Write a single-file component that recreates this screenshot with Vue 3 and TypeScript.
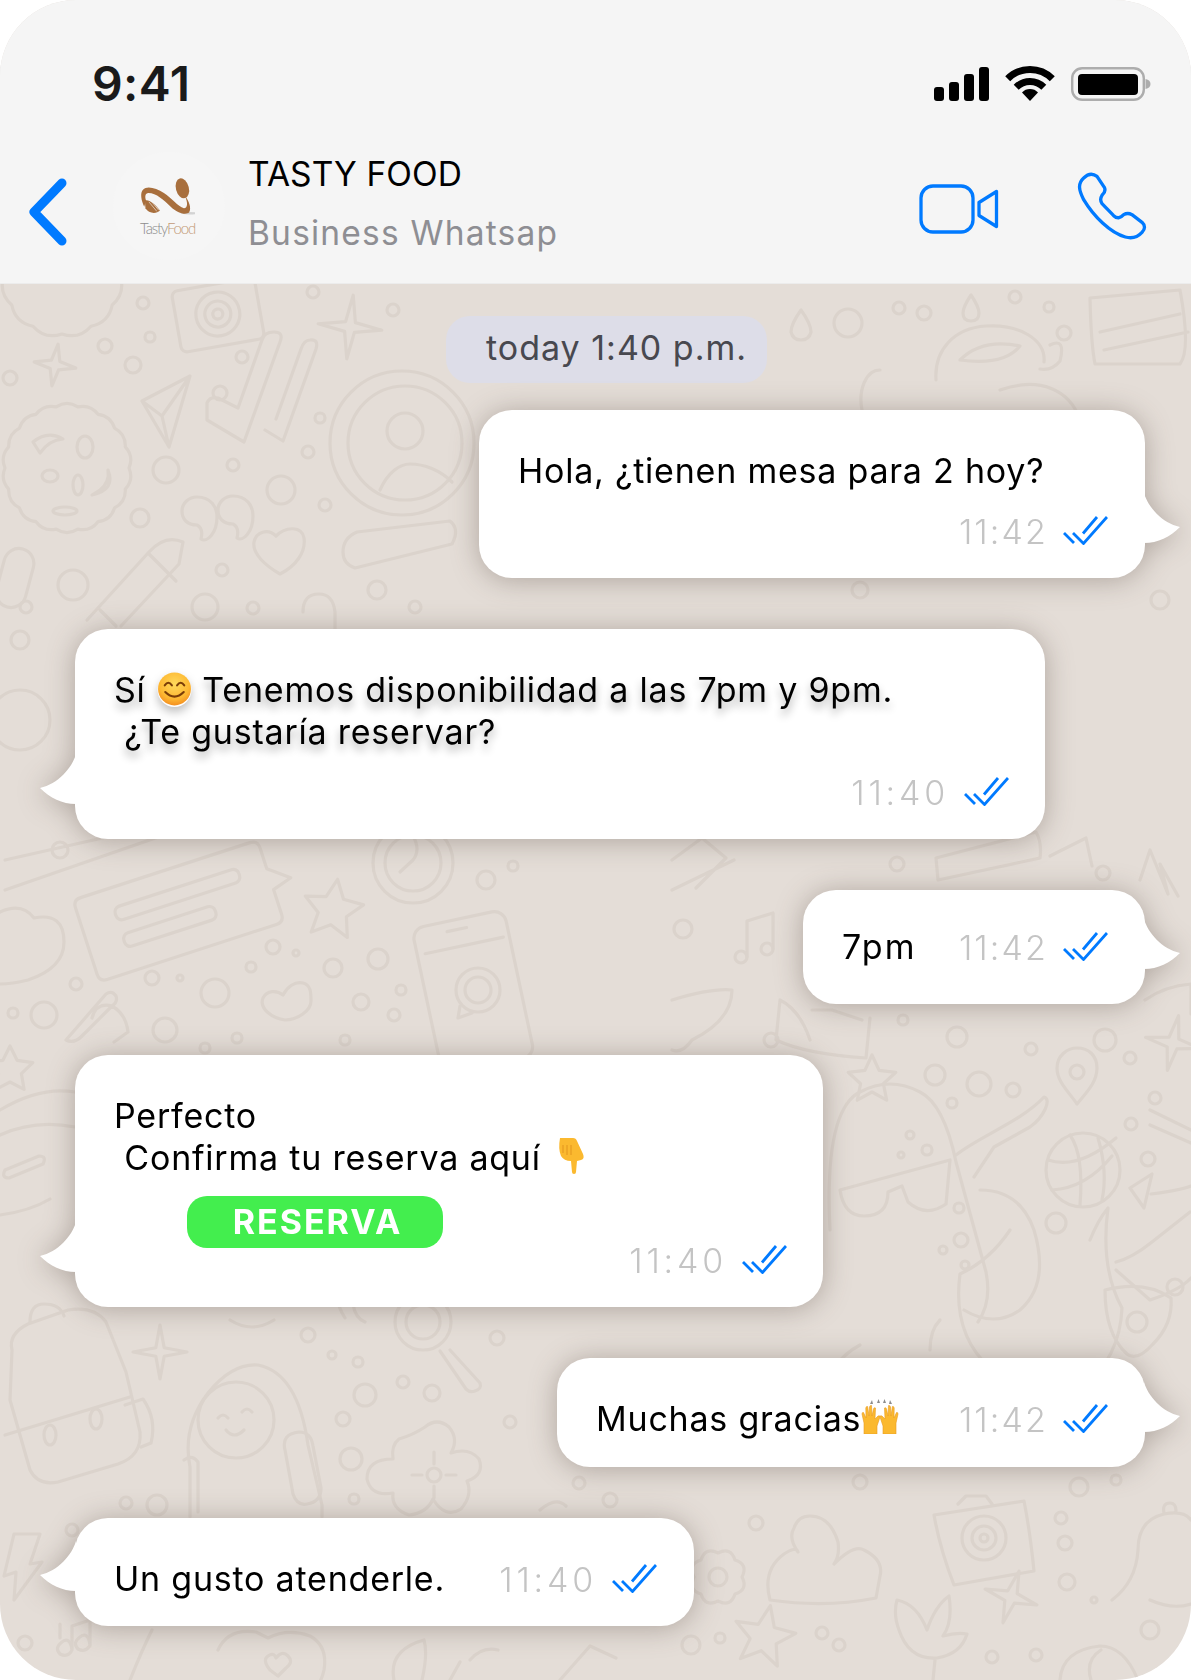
<script setup lang="ts">
type Circle = [number, number, number]

const circles: Circle[] = [
  [143,303,6],[105,346,7],[150,337,5],[133,365,8],[10,378,7],[242,357,6],[313,292,6],[393,310,6],[220,393,7],[320,418,5],
  [308,452,6],[166,470,13],[233,465,6],[281,490,14],[140,518,9],[325,505,6],[222,570,6],[73,585,15],[26,607,6],[205,607,13],
  [253,608,6],[377,590,9],[415,607,6],[486,880,9],[513,866,5],[273,947,7],[296,953,3],[251,967,5],[333,968,9],[378,959,10],
  [76,984,6],[152,978,7],[180,978,3],[215,993,14],[361,1002,8],[401,990,5],[394,1015,6],[13,1013,5],[44,1015,13],[165,1030,12],
  [237,1038,5],[205,1048,5],[345,1040,5],[308,1335,7],[332,1355,4],[358,1362,5],[497,1338,7],[403,1382,6],[365,1395,11],[432,1393,8],
  [343,1419,7],[351,1459,11],[354,1499,5],[126,1503,6],[157,1505,10],[510,1422,6],[25,1643,7],[72,1530,6],[683,929,9],[897,864,7],
  [1103,873,7],[903,1020,5],[957,1037,10],[771,1040,7],[1031,1049,6],[1105,1040,11],[1130,1058,6],[935,1075,10],[979,1084,12],[1013,1090,7],
  [952,1103,5],[1155,1098,6],[1131,1124,6],[1148,1159,7],[1056,1223,10],[959,1208,5],[961,1240,7],[943,1250,4],[965,1265,4],[1175,1287,8],
  [910,1135,4],[927,1150,5],[901,1155,3],[899,308,6],[924,313,7],[1015,297,6],[1049,307,5],[1064,333,7],[848,323,14],[756,1523,7],
  [579,1483,6],[610,1500,7],[860,1482,7],[1079,1487,9],[1116,1480,5],[1061,1518,6],[1065,1543,7],[1067,1582,8],[1094,1600,3],[822,1633,6],
  [839,1645,6],[720,1638,5],[691,1645,9],[992,1657,6],[1036,1655,6],[1150,1630,9],[20,640,9],[20,720,30],[60,850,8],[860,590,8],[1160,600,9]
]

function scallop(cx: number, cy: number, r: number, n: number, bump: number): string {
  let d = ''
  for (let i = 0; i <= n; i++) {
    const a = (i / n) * Math.PI * 2
    const x = (cx + r * Math.cos(a)).toFixed(1)
    const y = (cy + r * Math.sin(a)).toFixed(1)
    if (i === 0) {
      d += `M${x} ${y}`
    } else {
      const m = a - Math.PI / n
      const qx = (cx + (r + bump) * Math.cos(m)).toFixed(1)
      const qy = (cy + (r + bump) * Math.sin(m)).toFixed(1)
      d += `Q${qx} ${qy} ${x} ${y}`
    }
  }
  return d + 'Z'
}

function star(cx: number, cy: number, r: number, inner: number, points: number, rot = 0): string {
  let d = ''
  for (let i = 0; i < points * 2; i++) {
    const rad = i % 2 === 0 ? r : inner
    const a = (i * Math.PI) / points - Math.PI / 2 + rot
    d += `${i === 0 ? 'M' : 'L'}${(cx + rad * Math.cos(a)).toFixed(1)} ${(cy + rad * Math.sin(a)).toFixed(1)}`
  }
  return d + 'Z'
}

const cookie = scallop(67, 468, 62, 18, 6)
const cloud = scallop(62, 276, 58, 12, 8)
const gear = scallop(718, 1577, 24, 8, 9)
const stars = [
  star(350, 327, 32, 7, 4, 0.1),
  star(55, 365, 21, 6, 4, 0.15),
  star(160, 1352, 27, 6, 4),
  star(1173, 1043, 28, 7, 4, 0.2),
  star(1011, 1597, 27, 7, 4, 0.3),
  star(333, 910, 31, 15, 5, 0.15),
  star(872, 1080, 25, 12, 5),
  star(10, 1070, 24, 12, 5),
  star(764, 1637, 32, 14, 5, 0.2)
]
</script>

<template>
  <main class="phone">
    <header class="head">
      <div class="status">
        <span class="clock">9:41</span>
        <div class="status-icons">
          <svg class="signal" viewBox="0 0 55 34" aria-hidden="true">
            <rect x="0" y="20" width="10" height="14" rx="3" />
            <rect x="15" y="15" width="10" height="19" rx="3" />
            <rect x="30" y="7" width="10" height="27" rx="3" />
            <rect x="45" y="0" width="10" height="34" rx="3" />
          </svg>
          <svg class="wifi" viewBox="0 0 50 36" aria-hidden="true">
            <path d="M2.7 13.7A31.5 31.5 0 0 1 47.3 13.7" fill="none" stroke="#000" stroke-width="7" />
            <path d="M11.2 22.200A19.500 19.500 0 0 1 38.800 22.200" fill="none" stroke="#000" stroke-width="7" />
            <path d="M17 27.500A11 11 0 0 1 33 27.500L25 36Z" fill="#000" />
          </svg>
          <svg class="battery" viewBox="0 0 80 34" aria-hidden="true">
            <rect x="1.2" y="1.200" width="71.600" height="31.600" rx="10" fill="none" stroke="#adadad" stroke-width="2.400" />
            <rect x="7" y="7" width="60" height="21" rx="4" fill="#000" />
            <path d="M74.500 12C78 12.500 79.500 14.500 79.500 17S78 21.500 74.500 22Z" fill="#adadad" />
          </svg>
        </div>
      </div>
      <div class="nav">
        <svg class="back" viewBox="0 0 38 68" aria-hidden="true">
          <path d="M33 5 5 34l28 29" fill="none" stroke="#007aff" stroke-width="9" stroke-linecap="round" stroke-linejoin="round" />
        </svg>
        <div class="avatar">
          <svg class="logo" viewBox="110 100 180 130" aria-hidden="true">
            <ellipse cx="272" cy="221" rx="28" ry="4" fill="#bdbdbd" opacity=".6" />
            <ellipse cx="250" cy="140" rx="21" ry="33" fill="#a86f3d" transform="rotate(-15 250 140)" />
            <path d="M258 165C272 180 280 205 272 218 262 228 235 222 212 200 190 178 165 155 140 155 128 155 128 168 132 180L126 200C116 180 112 155 122 145 135 130 165 140 190 155 215 172 235 198 255 205 268 205 268 185 258 165Z" fill="#a86f3d" />
            <path d="M128 180C140 175 160 190 177 212 165 225 140 222 130 205Z" fill="#a86f3d" />
            <path d="M141 184l26 31M148 181l25 30M155 182l20 25" stroke="#f5f5f5" stroke-width="2" fill="none" />
          </svg>
          <span class="logo-text"><span class="lt-a">Tasty</span><span class="lt-b">Food</span></span>
        </div>
        <div class="title">
          <span class="name">TASTY FOOD</span>
          <span class="sub">Business Whatsap</span>
        </div>
        <svg class="video" viewBox="0 0 80 50" aria-hidden="true">
          <rect x="2" y="2" width="52" height="46" rx="12" fill="none" stroke="#007aff" stroke-width="3.300" />
          <path d="M77.500 7.500v35L60 31.500v-13Z" fill="none" stroke="#007aff" stroke-width="3.300" stroke-linejoin="round" />
        </svg>
        <svg class="call" viewBox="830 424 210 210" aria-hidden="true">
          <path d="M850 445Q870 425 890 440L912 473Q918 485 905 497 897 510 905 522L940 558Q955 572 970 555 982 548 995 555L1025 578Q1040 592 1025 608 1005 630 975 622C930 610 880 560 850 510 835 480 832 462 850 445Z" fill="none" stroke="#007aff" stroke-width="10" stroke-linejoin="round" />
        </svg>
      </div>
    </header>

    <section class="chat">
      <svg class="doodles" viewBox="0 283 1191 1397" aria-hidden="true">
        <g fill="none" stroke="#dbd3cc" stroke-width="3.200" stroke-linecap="round" stroke-linejoin="round">
          <circle v-for="(c, i) in circles" :key="i" :cx="c[0]" :cy="c[1]" :r="c[2]" />
          <path v-for="(s, i) in stars" :key="'s' + i" :d="s" />
          <path :d="cookie" />
          <path :d="cloud" />
          <path :d="gear" />
          <circle cx="718" cy="1577" r="9" />
          <ellipse cx="85" cy="447" rx="8" ry="11" />
          <ellipse cx="50" cy="476" rx="8" ry="6" />
          <ellipse cx="78" cy="485" rx="5" ry="10" />
          <ellipse cx="65" cy="511" rx="12" ry="4" />
          <path d="M33 442q15-12 30-3-14 1-23 14ZM100 490q10-8 8-20 8 20-16 25Z" />
          <g transform="rotate(-10 218 315)">
            <rect x="176" y="284" width="84" height="62" rx="6" />
            <circle cx="218" cy="314" r="22" /><circle cx="218" cy="314" r="13" /><circle cx="218" cy="314" r="5" />
          </g>
          <path d="M190 376 142 401l27 46ZM190 376l-28 40-20-15M162 416l7 31" />
          <path d="M207 420l37 22 36-100q4-10-6-10t-12 8l-24 68-20-10q-8-2-11 5ZM265 430l18 11 33-92q3-10-6-9-6 0-9 9l-25 70" />
          <circle cx="402" cy="443" r="72" /><circle cx="405" cy="443" r="57" /><circle cx="405" cy="431" r="18" />
          <path d="M380 490c8-18 20-26 30-26 14 0 30 6 42 18" />
          <path d="M197 497c14 0 20 10 20 20 0 16-10 26-16 22 2-8 0-12-4-14-10 0-15-6-15-14s7-14 15-14ZM233 496c14 0 20 10 20 20 0 16-10 26-16 22 2-8 0-12-4-14-10 0-15-6-15-14s7-14 15-14Z" />
          <path d="M280 574c-14-8-28-20-26-32 2-10 14-14 22-6 10-10 26-10 28 2 2 14-8 28-24 36Z" />
          <path d="M357 532 450 521q10 8 2 23l-97 24q-12-4-12-16 0-14 14-20Z" />
          <path d="M87 620l62-68q16-18 34-10l-4 22-58 62M148 553l28 28M100 610l16 16" />
          <rect x="0" y="548" width="30" height="60" rx="15" transform="rotate(15 15 578)" />
          <path d="M303 612q0-18 16-18 14 0 16 18v20" />
          <g transform="rotate(-18 182 912)">
            <path d="M82 880q0-8 8-8h178q8 0 8 8v22l20 16-20 6v26q0 8-8 8H90q-8 0-8-8Z" transform="translate(0 -5)" />
            <rect x="118" y="887" width="130" height="14" rx="6" />
            <rect x="118" y="915" width="96" height="14" rx="6" />
          </g>
          <path d="M0 912q22-10 34 6 30-6 30 24 0 26-36 38-16 4-28 4" />
          <path d="M5 860 160 825q8 0 4 10L5 890" />
          <circle cx="413" cy="863" r="40" /><circle cx="413" cy="863" r="28" />
          <path d="M413 836q8 14 0 24l-13 12" />
          <path d="M285 1020c-14-2-26-12-22-22 4-8 14-8 20-3 4-8 12-14 20-12 8 2 8 10 8 18 0 10-14 19-26 19Z" />
          <g transform="rotate(-12 470 982)">
            <rect x="424" y="918" width="94" height="150" rx="12" />
            <path d="M432 945h80M458 928h20" />
          </g>
          <circle cx="478" cy="990" r="22" /><circle cx="478" cy="990" r="13" />
          <path d="M460 1006l-2 12 14-5" />
          <path d="M66 1040l40-46q6-4 10 2 2 6-4 10l-30 30q-8 8-16 4ZM92 1018q4-16 20-12 14 8 16 26l-14 10" />
          <path d="M0 1110q40-24 75-18M0 1135q35-16 75-8M5 1170l34-14q8 0 4 8l-34 14q-8 0-4-8ZM0 1215q30-4 50-16" />
          <path d="M12 1350q-4-16 16-26l40-14q26-4 38 12l20 50 14 60q2 24-22 32l-60 18q-20 4-28-12l-20-70Z" />
          <path d="M30 1322q0-18 14-18 16 0 20 12M5 1435l125-38M125 1405l18-6q14 20 8 44l-10 4" />
          <ellipse cx="50" cy="1435" rx="6" ry="10" /><ellipse cx="96" cy="1419" rx="6" ry="10" />
          <path d="M190 1517v-50q-8-40 18-74 24-30 50-28 40 8 50 80l14 60v12" />
          <circle cx="236" cy="1420" r="38" />
          <path d="M218 1418q5-6 10 0M242 1412q5-6 10 0M226 1430q8 10 18 0" />
          <path d="M285 1450q-4-16 14-18 12 0 14 14l8 42q0 14-14 16-10 2-14-10ZM184 1460q8-6 14 2v50" />
          <path d="M425 1427q12-10 24 0 10 12 2 26 18-6 28 6 6 16-12 22 6 14-6 28-16 10-28-10-6 14-24 16-18-6-16-22-22 4-26-14 0-20 26-20-2-14 6-20 14-4 26-12Z" />
          <circle cx="434" cy="1475" r="7" />
          <path d="M434 1452v12M434 1486v12M412 1475h10M446 1475h10" />
          <circle cx="423" cy="1322" r="28" /><circle cx="423" cy="1322" r="17" />
          <path d="M450 1350l30 33q2 6-5 8-5 2-9-2l-26-38" />
          <path d="M345 1318q-10-16-6-24M230 1320q22 14 44 0M365 1322q-10-4-12-18" />
          <path d="M14 1534h26l-10 30 12-2-28 38 2-28-12 4Z" />
          <path d="M60 1638v-14M72 1650q-4 8-12 4-6-6 2-12t10 8ZM90 1645q-4 8-12 4-6-6 2-12t10 8ZM72 1650v-24l18-6v26" />
          <path d="M218 1650q10-22 38-18l12 6q20-10 42-2 18 10 14 34-2 10-8 18M270 1670q-8-10-2-14t8 2q6-8 12-2t-2 12l-8 8Z" />
          <path d="M130 1680q12-30 22-50M394 1680q-6-30 30-40 4 14-2 40M470 1660q12-14 28-10M450 1680l10-18" />
          <path d="M747 957v-36l26-8v36" /><circle cx="741" cy="957" r="6" /><circle cx="767" cy="949" r="6" />
          <path d="M1077 1104c-8-12-20-22-20-36 0-12 10-20 20-20 12 0 20 8 20 20 0 14-10 24-20 36Z" /><circle cx="1077" cy="1072" r="7" />
          <circle cx="1083" cy="1170" r="37" />
          <path d="M1048 1160q30 10 68-22M1052 1190q34-2 60-34M1070 1135q14 20 10 70M1098 1138q10 34 4 62" />
          <path d="M830 1230q-6-120 30-138 30-16 60 0 24 12 36 70l30 110q6 30-8 50" />
          <path d="M840 1190l110-30-4 44q-20 14-38-2l-6-16-14 6q0 24-24 24-20 0-24-26Z" />
          <path d="M956 1155c22-18 66-34 88-58 8 2 0 20-14 30l-36 20-20 30" />
          <path d="M980 1190q40 0 54 40 16 54-14 80-26 18-56 0M1010 1230q-20 30-50 44-8 60 30 94" />
          <path d="M1090 1240q8-20 18-32-8 60 14 100-2 50-40 80" />
          <path d="M1116 1262q16-4 36-20l38-30M1116 1270l34 30q30-10 41-22" />
          <path d="M1150 1110l41 20M1150 1125l41 18" />
          <path d="M1130 1188l22-14-8 34ZM1191 1186q-10 4-40 8" />
          <path d="M1105 1290q40-10 66 8 2 26-18 46-16 18-26 10-22-20-22-64Z" /><circle cx="1137" cy="1322" r="10" />
          <path d="M860 1345q-30 16-36 50-8 30 24 40l60-6M940 1320q-10 10-10 30" />
          <path d="M672 890l62-30M672 860l30-22 24 20-30 30M936 858l100-26q6 10 4 26l-102 22ZM1050 856l36-18 6 28M1140 880l10-30 18 44-8-30 18 32" />
          <path d="M672 1000q40-12 60-10 0 30-40 50-10 14-20 10M780 1000l-4 40q30 14 90 18l4-40M780 1000q20 10 30 40" />
          <path d="M812 1010l20 0 30 10" />
          <path d="M1145 1000q20-14 46-16v30" />
          <path d="M801 310q-10 14-10 22 2 8 10 8t10-8q0-8-10-22ZM971 295q-8 12-8 18 0 8 8 8t8-8q0-6-8-18Z" />
          <path d="M936 380c-2-30 18-52 50-54 34-2 60 14 58 36M960 360q22-22 60-14-16 20-60 14ZM1050 345q16-8 10 16-8 10-20 8" />
          <path d="M1090 298l90-8q11 60 0 74l-85 0q-4-20-5-66ZM1100 332l80-18M1104 350l84-18" />
          <path d="M880 370c-14 0-22 20-18 40M1000 390c40-14 70 0 80 30" />
          <path d="M770 1600q-8-30 14-46 12-8 14-2-10-14-4-24 4-12 16-12 20 0 28 26 2 14-4 22 20-20 30-14 20 10 16 26l-4 22q-50 10-106 2Z" />
          <path d="M934 1515l90-14q6 30 10 70l-80 14q-14-36-20-70ZM958 1504l8-8h20l6 8" />
          <circle cx="984" cy="1538" r="22" /><circle cx="984" cy="1538" r="12" /><circle cx="984" cy="1538" r="4" />
          <path d="M1112 1600q24-18 26-50 0-30 26-36 20-4 27 6M1150 1600q22 10 41 4M1164 1513q-2-10 6-10 6 0 6 8" />
          <path d="M897 1600q20 4 30 30 8-24 22-34 4 26-6 40 14-4 24-2-6 20-30 24-28 2-38-28-6-16-2-30ZM935 1660l-2 20" />
          <path d="M1060 1680q2-30 40-34 24 0 38 34M1091 1680q-6-20 10-30" />
          <path d="M560 1680l30-34 26 12M540 1510q16-14 26-4" />
        </g>
      </svg>

      <div class="pill">today 1:40 p.m.</div>

      <article class="bubble right b1">
        <svg class="tail" viewBox="0 0 36 50" aria-hidden="true"><path d="M0 0C4 14 18 30 36 34 26 44 14 50 0 50Z" /></svg>
        <p class="line">Hola, ¿tienen mesa para 2 hoy?</p>
        <div class="meta below">
          <span class="stamp">11:42</span>
          <svg class="ticks" viewBox="0 0 45 29"><path d="M1 17l10 10M10 17l10.500 10.500L44 1M20 17.500 34 1" /></svg>
        </div>
      </article>

      <article class="bubble left b2">
        <svg class="tail" viewBox="0 0 36 50" aria-hidden="true"><path d="M0 0C4 14 18 30 36 34 26 44 14 50 0 50Z" /></svg>
        <p class="line shadowed">Sí <svg class="smile" viewBox="0 0 36 36" aria-hidden="true">
          <defs>
            <radialGradient id="sm" cx="50%" cy="35%" r="70%"><stop offset="0" stop-color="#ffd95c" /><stop offset=".65" stop-color="#fdb832" /><stop offset="1" stop-color="#f2851c" /></radialGradient>
          </defs>
          <circle cx="18" cy="17.500" r="16.500" fill="#fff" transform="translate(0 1)" />
          <circle cx="18" cy="17.500" r="16" fill="url(#sm)" />
          <path d="M8.500 14q3.500-5 7 0M20.500 14q3.500-5 7 0" fill="none" stroke="#7a3d08" stroke-width="2" stroke-linecap="round" />
          <path d="M9 20.500q9 9 18 0" fill="none" stroke="#7a3d08" stroke-width="2" stroke-linecap="round" />
        </svg> Tenemos disponibilidad a las 7pm y 9pm.</p>
        <p class="line shadowed">&nbsp;¿Te gustaría reservar?</p>
        <div class="meta below">
          <span class="stamp wide">11:40</span>
          <svg class="ticks" viewBox="0 0 45 29"><path d="M1 17l10 10M10 17l10.500 10.500L44 1M20 17.500 34 1" /></svg>
        </div>
      </article>

      <article class="bubble right b3">
        <svg class="tail" viewBox="0 0 36 50" aria-hidden="true"><path d="M0 0C4 14 18 30 36 34 26 44 14 50 0 50Z" /></svg>
        <p class="line">7pm</p>
        <div class="meta">
          <span class="stamp">11:42</span>
          <svg class="ticks" viewBox="0 0 45 29"><path d="M1 17l10 10M10 17l10.500 10.500L44 1M20 17.500 34 1" /></svg>
        </div>
      </article>

      <article class="bubble left b4">
        <svg class="tail" viewBox="0 0 36 50" aria-hidden="true"><path d="M0 0C4 14 18 30 36 34 26 44 14 50 0 50Z" /></svg>
        <p class="line">Perfecto</p>
        <p class="line">&nbsp;Confirma tu reserva aquí <svg class="point" viewBox="0 0 29 38" aria-hidden="true">
          <path d="M3 1h13q3 0 4 3l6 13q2 5-2 6l-4 1-1 11q0 2-2 2t-2-2l-1-11q-7 0-10-5Q1 12 3 1Z" fill="#fbb92f" />
          <path d="M6 8v8M10 8v10M14 8v10" stroke="#e2951f" stroke-width="1" fill="none" />
        </svg></p>
        <div class="action">
          <a class="reserve">RESERVA</a>
          <div class="meta">
            <span class="stamp wide">11:40</span>
            <svg class="ticks" viewBox="0 0 45 29"><path d="M1 17l10 10M10 17l10.500 10.500L44 1M20 17.500 34 1" /></svg>
          </div>
        </div>
      </article>

      <article class="bubble right b5">
        <svg class="tail" viewBox="0 0 36 50" aria-hidden="true"><path d="M0 0C4 14 18 30 36 34 26 44 14 50 0 50Z" /></svg>
        <p class="line">Muchas gracias<svg class="hands" viewBox="0 0 38 35" aria-hidden="true">
          <g fill="#fbb92f" stroke="#e79a22" stroke-width=".6">
            <path d="M3 35V24L1 15q0-2 1.500-1.500L5 19l-.2-10q.3-2 1.800-1.500L8 17l.5-9q.5-2 2-1.500L11 17l1.500-7q.5-2 2-1L14 20l3-3q2-1 2 1l-3 9v8Z" />
            <path d="M35 35V24l2-9q0-2-1.500-1.500L33 19l.2-10q-.3-2-1.800-1.500L30 17l-.5-9q-.5-2-2-1.500L27 17l-1.500-7q-.5-2-2-1L24 20l-3-3q-2-1-2 1l3 9v8Z" />
          </g>
          <path d="M9 5l2-4 1 4ZM16 4l1.500-4 1.500 4ZM22 4l1.500-4L25 4ZM28 5l1-4 2 4Z" fill="#8c8c8c" />
        </svg></p>
        <div class="meta">
          <span class="stamp">11:42</span>
          <svg class="ticks" viewBox="0 0 45 29"><path d="M1 17l10 10M10 17l10.500 10.500L44 1M20 17.500 34 1" /></svg>
        </div>
      </article>

      <article class="bubble left b6">
        <svg class="tail" viewBox="0 0 36 50" aria-hidden="true"><path d="M0 0C4 14 18 30 36 34 26 44 14 50 0 50Z" /></svg>
        <p class="line">Un gusto atenderle.</p>
        <div class="meta">
          <span class="stamp wide">11:40</span>
          <svg class="ticks" viewBox="0 0 45 29"><path d="M1 17l10 10M10 17l10.500 10.500L44 1M20 17.500 34 1" /></svg>
        </div>
      </article>
    </section>
  </main>
</template>

<style scoped>
.phone {
  width: 1191px;
  height: 1680px;
  border-radius: 76px;
  overflow: hidden;
  display: flex;
  flex-direction: column;
  font-family: Inter, "Liberation Sans", sans-serif;
  background: #e4ddd7;
}
.head {
  height: 283px;
  flex: none;
  background: #f5f5f5;
  box-shadow: 0 1px 0 #ececec;
  position: relative;
  z-index: 1;
}
.status {
  height: 141px;
  padding: 60px 40px 0 92px;
  box-sizing: border-box;
  display: flex;
  justify-content: space-between;
  align-items: flex-start;
}
.clock {
  font-size: 48px;
  line-height: 48px;
  font-weight: 600;
  color: #1a1a1a;
  letter-spacing: 0.4px;
}
.status-icons {
  display: flex;
  align-items: flex-start;
  gap: 16px;
  padding-top: 6px;
}
.signal { width: 55px; height: 34px; fill: #000; margin-top: 1px; }
.wifi { width: 50px; height: 36px; margin-top: -1px; }
.battery { width: 80px; height: 34px; margin-top: 1px; }
.nav {
  display: flex;
  align-items: center;
  height: 136px;
  padding-left: 29px;
  box-sizing: border-box;
}
.back { width: 38px; height: 68px; flex: none; margin-top: 5px; }
.avatar {
  width: 112px;
  height: 108px;
  margin-left: 46px;
  margin-top: -6px;
  border-radius: 50%;
  background: #f6f6f6;
  flex: none;
  display: flex;
  flex-direction: column;
  align-items: center;
  padding-top: 24px;
  box-sizing: border-box;
}
.logo { width: 56px; height: 40px; margin-left: -5px; flex: none; }
.logo-text {
  font-family: Lato, sans-serif;
  font-size: 15px;
  line-height: 16px;
  font-weight: 300;
  margin-top: 4px;
  margin-left: -3px;
  letter-spacing: -1.2px;
}
.lt-a { color: #8d8d8d; }
.lt-b { color: #c39a76; }
.title {
  display: flex;
  flex-direction: column;
  margin-left: 23px;
  gap: 18px;
  flex: 1;
  margin-top: -10px;
}
.name {
  font-size: 33.500px;
  line-height: 41px;
  color: #000;
  letter-spacing: 0.1px;
}
.sub {
  font-size: 33.500px;
  line-height: 41px;
  color: #8e8e93;
  letter-spacing: 1.2px;
}
.video { width: 80px; height: 50px; margin-right: 78.500px; flex: none; margin-top: -1px; }
.call { width: 70px; height: 70px; margin-right: 44px; flex: none; margin-top: -7px; }

.chat {
  position: relative;
  flex: 1;
  display: flex;
  flex-direction: column;
  align-items: flex-start;
  padding-top: 33px;
  gap: 51px;
  box-sizing: border-box;
}
.doodles {
  position: absolute;
  left: 0;
  top: 0;
  width: 1191px;
  height: 1397px;
  filter: blur(0.6px);
}
.pill {
  position: relative;
  margin: 0 0 -24px 446px;
  height: 67px;
  width: 321px;
  padding-left: 40px;
  box-sizing: border-box;
  border-radius: 24px;
  background: #dddde8;
  color: #48484f;
  font-size: 34px;
  line-height: 63px;
  letter-spacing: 1px;
}
.bubble {
  position: relative;
  background: #fff;
  border-radius: 33px;
  box-sizing: border-box;
  filter: drop-shadow(0 2px 14px rgba(60, 45, 35, 0.32));
}
.right { margin-left: auto; margin-right: 46px; }
.left { margin-left: 75px; }
.tail {
  position: absolute;
  width: 36px;
  height: 50px;
  bottom: 35px;
  fill: #fff;
}
.right .tail { right: -35px; }
.left .tail { left: -35px; transform: scaleX(-1); }
.line {
  margin: 0;
  font-size: 34px;
  line-height: 42px;
  color: #000;
  white-space: nowrap;
  letter-spacing: 0.78px;
}
.shadowed { text-shadow: 0 6px 8px rgba(0, 0, 0, 0.32); }
.meta {
  display: flex;
  align-items: center;
  justify-content: flex-end;
  gap: 15px;
  height: 42px;
  padding-top: 2px;
  box-sizing: border-box;
}
.below { margin-top: 18px; }
.stamp {
  font-size: 34px;
  line-height: 42px;
  font-weight: 300;
  color: #c4c4c4;
  letter-spacing: 2.1px;
}
.stamp.wide { letter-spacing: 3.800px; }
.ticks {
  width: 45px;
  height: 29px;
  fill: none;
  stroke: #007aff;
  stroke-width: 2.800;
  margin-top: -3px;
}
.smile {
  width: 37px;
  height: 37px;
  vertical-align: -6px;
  margin-right: -1px;
  filter: drop-shadow(0 5px 5px rgba(0, 0, 0, 0.25));
}
.point { width: 29px; height: 38px; vertical-align: -5px; margin-left: 6px; }
.hands { width: 38px; height: 35px; vertical-align: -3px; }
.b1 { width: 666px; padding: 40px 37px 26px 39px; }
.b2 { width: 970px; padding: 40px 36px 26px 39px; }
.b3 {
  width: 342px;
  height: 114px;
  padding: 36px 37px 0 39px;
  display: flex;
  justify-content: space-between;
  align-items: flex-start;
}
.b3 .line { letter-spacing: 2.200px; }
.b4 { width: 748px; padding: 40px 36px 26px 39px; }
.action {
  display: flex;
  justify-content: space-between;
  align-items: flex-end;
  margin-top: 17px;
  height: 85px;
}
.reserve {
  align-self: flex-start;
  margin-left: 73px;
  width: 256px;
  height: 52px;
  border-radius: 20px;
  background: #43ee4e;
  color: #fff;
  font-size: 34px;
  font-weight: 700;
  line-height: 52px;
  text-align: center;
  text-indent: 5px;
  letter-spacing: 2px;
}
.b5 {
  width: 588px;
  height: 109px;
  padding: 40px 37px 0 39px;
  display: flex;
  justify-content: space-between;
  align-items: flex-start;
}
.b6 {
  width: 619px;
  height: 108px;
  padding: 40px 37px 0 39px;
  display: flex;
  justify-content: space-between;
  align-items: flex-start;
}
</style>

<style>
html, body { margin: 0; background: #fff; }
</style>
